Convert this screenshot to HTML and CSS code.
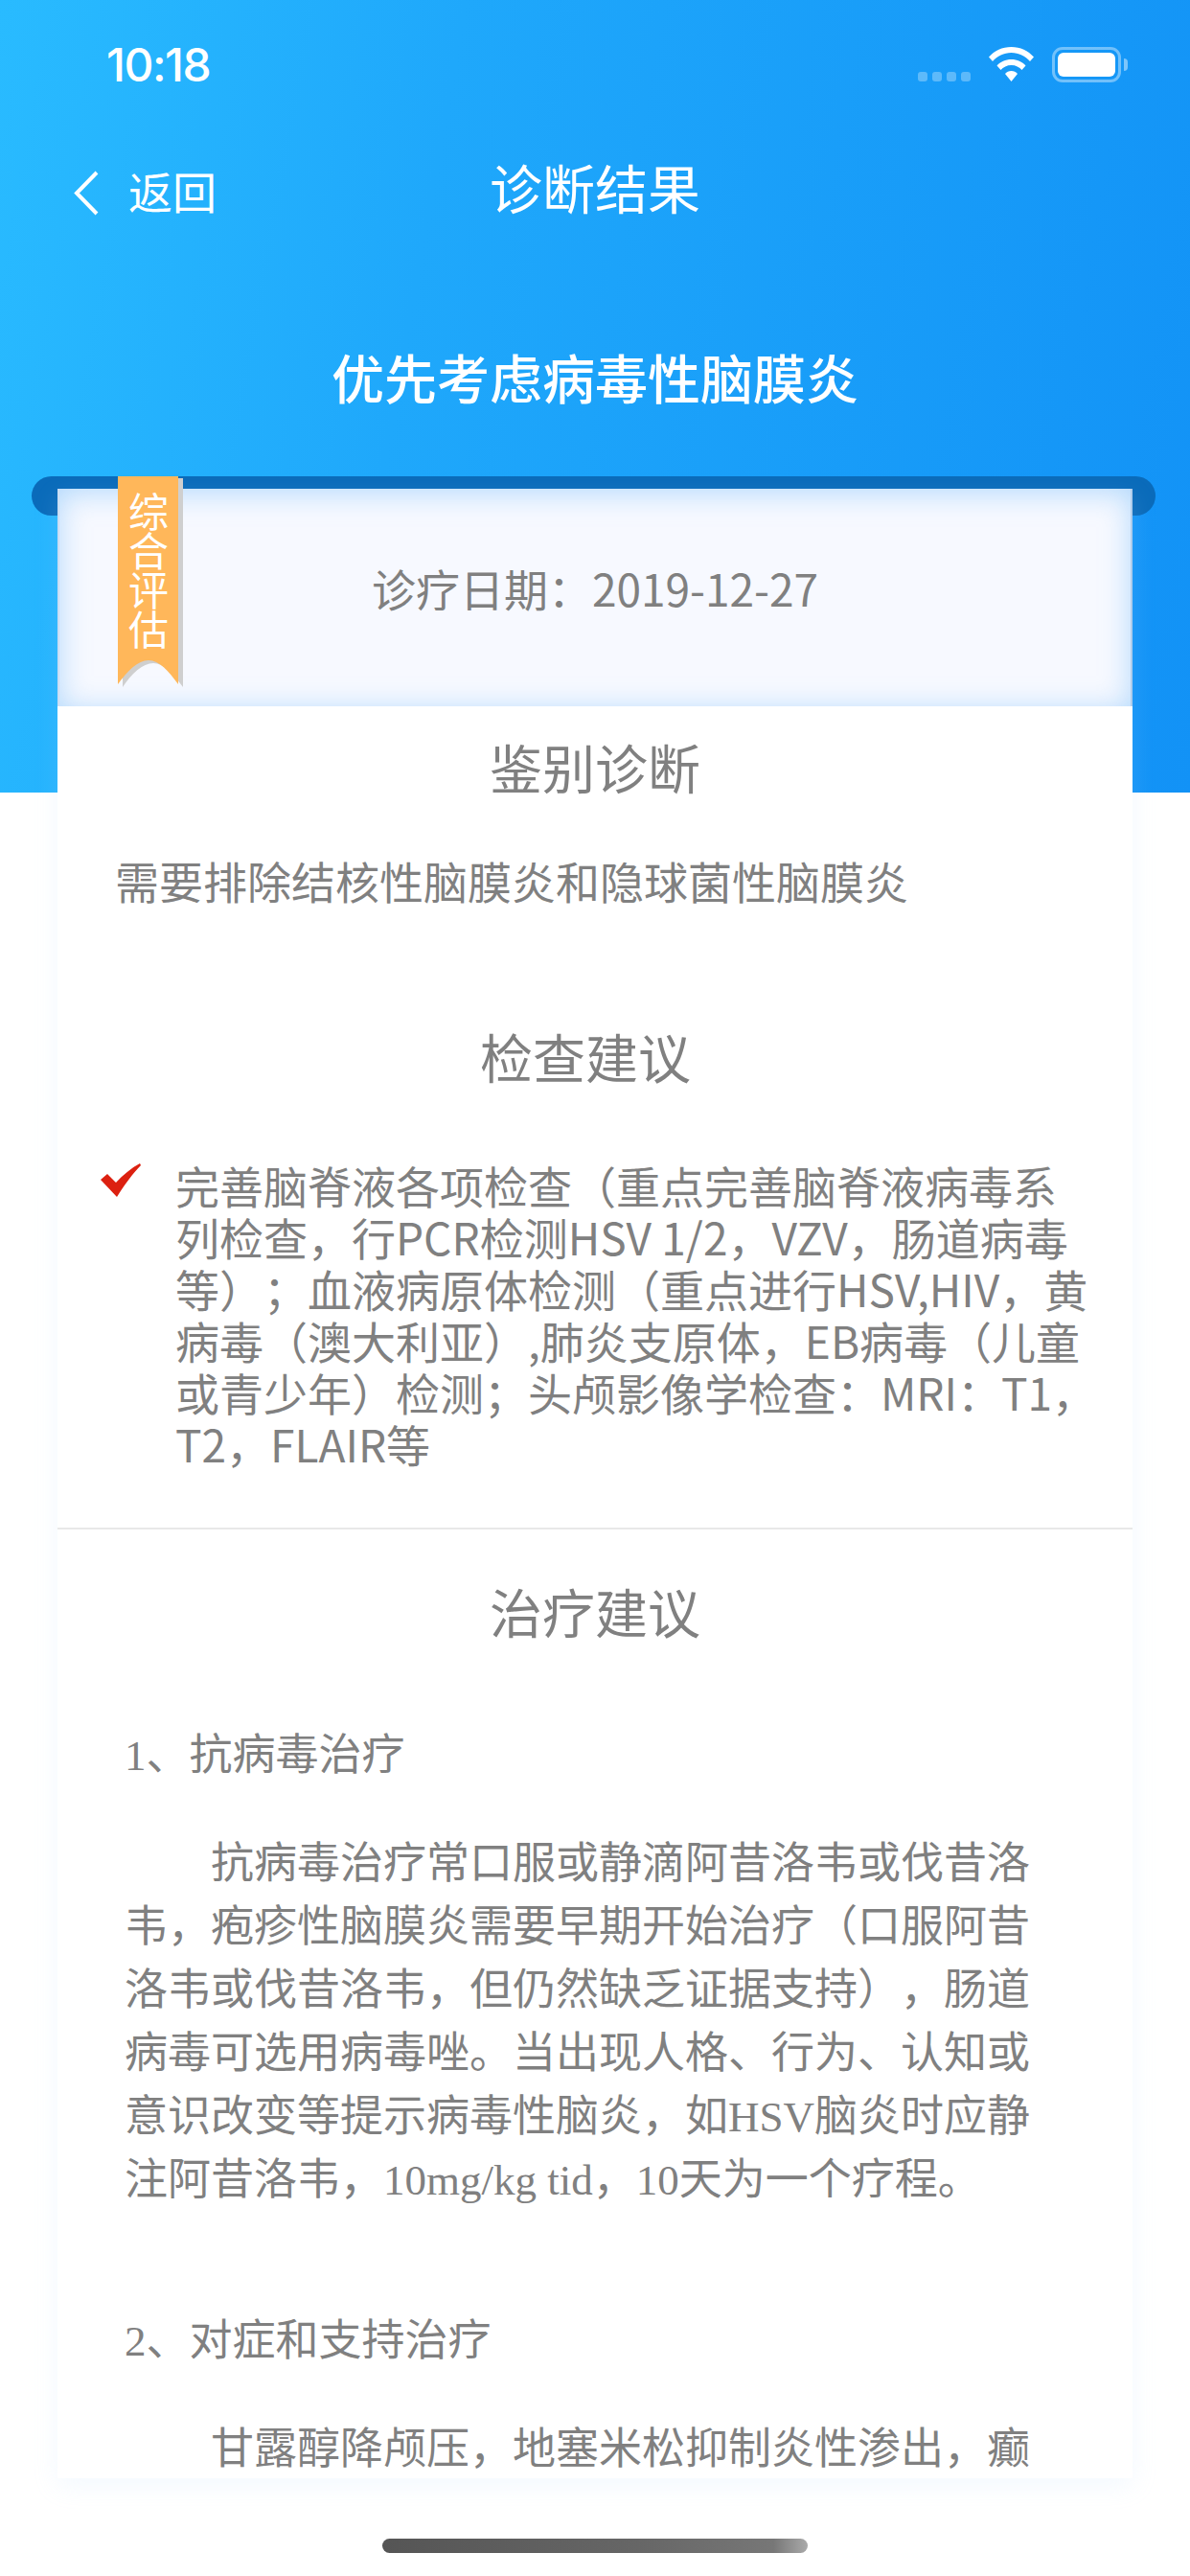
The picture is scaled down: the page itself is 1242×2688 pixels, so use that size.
FILE: index.html
```html
<!DOCTYPE html>
<html lang="zh-CN">
<head>
<meta charset="utf-8">
<title>诊断结果</title>
<link rel="stylesheet" href="styles.css">
</head>
<body>
<div class="screen">
  <header class="hero">
    <div class="status">
      <span class="time">10:18</span>
      <div class="status-icons">
        <div class="signal"><i></i><i></i><i></i><i></i></div>
        <svg class="wifi" width="47" height="36" viewBox="0 0 47 36"><path fill="#fff" d="M0 10.5C6 4 14 0 23.5 0S41 4 47 10.5L43 15C38 9.5 31.500 6 23.500 6S9 9.500 4 15Z"/><path fill="#fff" d="M8.500 19.500C12 15.500 17.500 13 23.500 13S35 15.500 38.500 19.500L34.500 24C32 21 28 19 23.500 19S15 21 12.500 24Z"/><path fill="#fff" d="M17 28C18.500 26.300 21 25 23.500 25S28.500 26.300 30 28L23.500 36Z"/></svg>
        <div class="battery"><div class="battery-fill"></div></div>
        <div class="battery-nub"></div>
      </div>
    </div>
    <nav class="nav">
      <div class="back">
        <svg width="27" height="47" viewBox="0 0 27 47"><path d="M25 2 4 23.500 25 45" fill="none" stroke="#fff" stroke-width="4"/></svg>
        <span class="back-label">返回</span>
      </div>
      <h1 class="nav-title">诊断结果</h1>
    </nav>
    <h2 class="headline">优先考虑病毒性脑膜炎</h2>
  </header>

  <main class="sheet">
    <div class="slot"></div>
    <section class="card">
      <div class="ribbon">
        <svg class="ribbon-bg" width="68" height="220" viewBox="0 0 68 220">
          <path fill="#cfcfcf" d="M5 2H68V220C58 206 48 195 37 195 26 195 14 206 5 220Z"/>
          <path fill="#ffb75a" d="M0 0H63V217C53 203 43 192 32 192 21 192 10 203 0 217Z"/>
        </svg>
        <span class="ribbon-text">综合评估</span>
      </div>
      <div class="date-panel">诊疗日期：2019-12-27</div>
      <h3 class="sec-title first">鉴别诊断</h3>
      <p class="diff">需要排除结核性脑膜炎和隐球菌性脑膜炎</p>
      <h3 class="sec-title second">检查建议</h3>
      <div class="check-row">
        <svg class="tick" width="42" height="35" viewBox="0 0 42 35"><path fill="#dc2010" d="M0 17 7 11 16 20C23 12 32 5 41 0L42 2C34 10 25 22 17 35Z"/></svg>
        <p class="check-text">完善脑脊液各项检查（重点完善脑脊液病毒系列检查，行PCR检测HSV 1/2，VZV，肠道病毒等）；血液病原体检测（重点进行HSV,HIV，黄病毒（澳大利亚）,肺炎支原体，EB病毒（儿童或青少年）检测；头颅影像学检查：MRI：T1，T2，FLAIR等</p>
      </div>
      <hr class="rule">
      <h3 class="sec-title third">治疗建议</h3>
      <div class="treat">
        <h4 class="treat-head">1、抗病毒治疗</h4>
        <p class="treat-para">抗病毒治疗常口服或静滴阿昔洛韦或伐昔洛韦，疱疹性脑膜炎需要早期开始治疗（口服阿昔洛韦或伐昔洛韦，但仍然缺乏证据支持），肠道病毒可选用病毒唑。当出现人格、行为、认知或意识改变等提示病毒性脑炎，如HSV脑炎时应静注阿昔洛韦，10mg/kg tid，10天为一个疗程。</p>
        <h4 class="treat-head next">2、对症和支持治疗</h4>
        <p class="treat-para">甘露醇降颅压，地塞米松抑制炎性渗出，癫</p>
      </div>
    </section>
  </main>

  <div class="home-bar"></div>
</div>
</body>
</html>
```

FILE: styles.css
```css
* { box-sizing: border-box; }
html, body { margin: 0; padding: 0; background: #fff; }
h1, h2, h3, h4, p { margin: 0; font-weight: 400; }

.screen {
  position: relative;
  width: 1242px;
  height: 2688px;
  overflow: hidden;
  background: #fff;
  font-family: "Noto Sans CJK SC", sans-serif;
  text-spacing-trim: space-all;
}

.hero {
  height: 827px;
  background: linear-gradient(100deg, #29bbff 0%, #1fa8fb 35%, #1292f6 100%);
  color: #fff;
}
.status {
  display: flex;
  justify-content: space-between;
  padding: 43px 65px 0 111px;
  height: 96px;
}
.time {
  font-family: Inter, "Liberation Sans", sans-serif;
  font-size: 48px;
  line-height: 50px;
  font-weight: 500;
  letter-spacing: -1.5px;
}
.status-icons { display: flex; align-items: flex-start; padding-top: 6px; }
.signal { display: flex; gap: 5px; margin-top: 26px; margin-right: 19px; }
.signal i { width: 10px; height: 10px; border-radius: 3px; background: rgba(255,255,255,.3); }
.wifi { display: block; margin-right: 19px; }
.battery {
  width: 72px; height: 37px;
  border: 3px solid rgba(255,255,255,.4);
  border-radius: 11px;
  padding: 3px;
}
.battery-fill { height: 100%; background: #fff; border-radius: 6px; }
.battery-nub {
  width: 4px; height: 13px; margin: 12px 0 0 3px;
  background: rgba(255,255,255,.45);
  border-radius: 0 6px 6px 0;
}

.nav { position: relative; display: flex; justify-content: center; padding-top: 63px; height: 150px; }
.back {
  position: absolute; left: 76px; top: 79px;
  display: flex; align-items: center; gap: 31px;
  font-size: 46px; line-height: 47px;
}
.back svg { display: block; }
.back-label { margin-bottom: 6px; }
.nav-title { font-size: 55px; line-height: 70px; }
.headline {
  padding-top: 106px;
  text-align: center;
  font-size: 55px; line-height: 80px;
  font-weight: 500;
}

.sheet {
  margin-top: -330px;
  padding-top: 13px;
  position: relative;
  height: 2089px;
}
.slot {
  position: absolute; left: 33px; top: 0;
  width: 1173px; height: 41px;
  background: #0a6bba;
  border-radius: 21px;
}
.card {
  position: relative;
  margin: 0 60px;
  height: 2076px;
  background: #fff;
  box-shadow: 0 8px 24px rgba(180,215,255,.16);
}
.ribbon {
  position: absolute; left: 63px; top: -13px;
  width: 68px; height: 220px;
  z-index: 2;
}
.ribbon-bg { position: absolute; left: 0; top: 0; }
.ribbon-text {
  position: absolute; left: 11px; top: 14px;
  width: 42px;
  color: #fff;
  font-size: 42px; line-height: 41px;
  text-align: center;
}
.date-panel {
  height: 227px;
  background: #f7f9ff;
  box-shadow: inset 0 4px 30px rgba(120,190,250,.55);
  border-right: 2px solid rgba(120,170,220,.55);
  border-left: 2px solid rgba(120,170,220,.35);
  color: #808080;
  font-size: 46px;
  line-height: 46px;
  padding-top: 80px;
  text-align: center;
}
.sec-title {
  text-align: center;
  color: #808080;
  font-size: 55px; line-height: 60px;
}
.sec-title.first { margin-top: 32px; }
.sec-title.second { margin-top: 125px; padding-right: 20px; }
.sec-title.third { margin-top: 54px; }
.diff {
  margin-top: 61px; padding-left: 60px;
  color: #808080;
  font-size: 46px; line-height: 56px;
}
.check-row {
  display: flex; align-items: flex-start;
  margin-top: 78px; padding-left: 45px;
}
.tick { flex: none; margin-top: 5px; }
.check-text {
  width: 962px; margin-left: 36px;
  color: #808080;
  font-size: 46px; line-height: 54px;
}
.rule { margin: 61px 0 0; border: 0; height: 2px; background: #e8e8e8; }
.treat {
  padding: 0 105px 0 70px;
  color: #808080;
  font-family: "Liberation Serif", "Noto Sans CJK SC", serif;
  font-size: 45px;
}
.treat-head { margin-top: 89px; font-size: 45px; line-height: 66px; }
.treat-head.next { margin-top: 102px; }
.treat-para { margin-top: 47px; text-indent: 90px; line-height: 66px; }

.home-bar {
  position: absolute; left: 399px; top: 2649px;
  width: 444px; height: 15px;
  border-radius: 8px;
  background: linear-gradient(90deg, #555 0%, #666 60%, #777 92%, #aaa 100%);
}
```
